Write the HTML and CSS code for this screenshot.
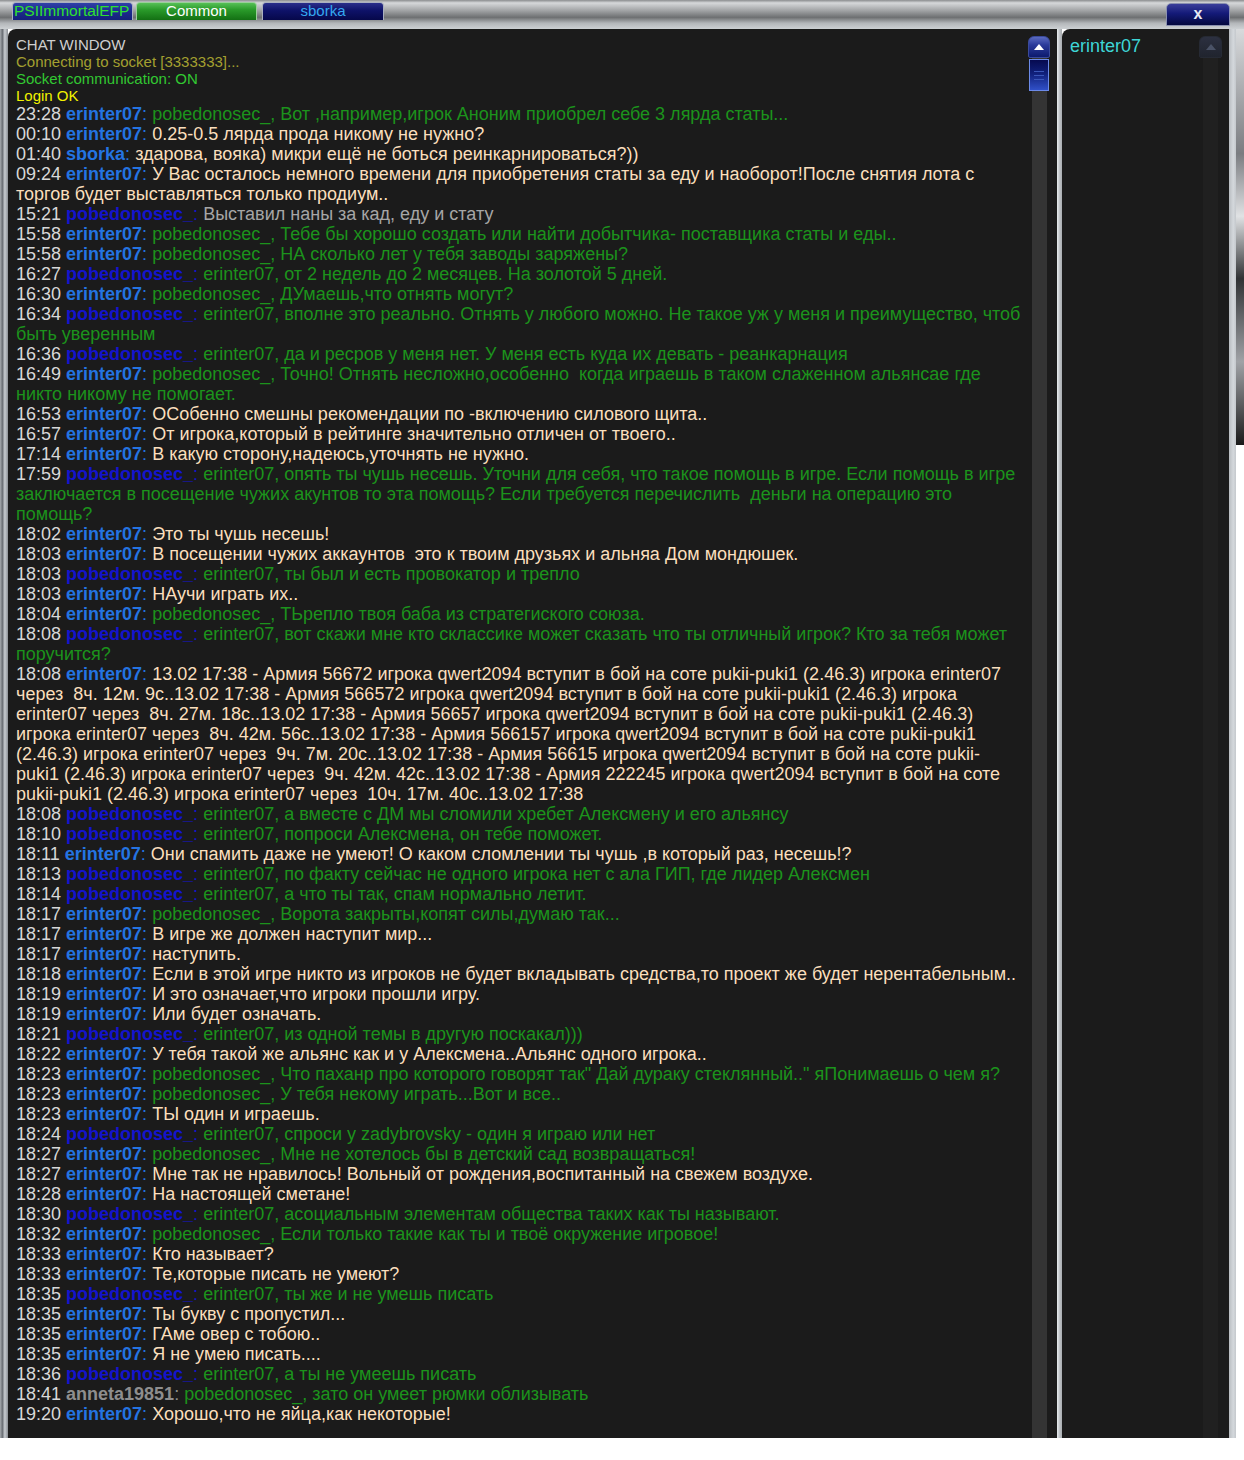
FILE: index.html
```html
<!DOCTYPE html>
<html lang="ru">
<head>
<meta charset="utf-8">
<title>Chat</title>
<link rel="stylesheet" href="styles.css">
</head>
<body>
<div class="window">
  <div class="topbar">
    <div class="tabs">
      <div class="tab tab-psi">PSIImmortalEFP</div>
      <div class="tab tab-common">Common</div>
      <div class="tab tab-sborka">sborka</div>
    </div>
    <div class="close">x</div>
  </div>
  <div class="main">
    <div class="edge-left"></div>
    <div class="chat">
      <div class="log">
        <div class="sys s-title">CHAT WINDOW</div>
        <div class="sys s-conn">Connecting to socket [3333333]...</div>
        <div class="sys s-on">Socket communication: ON</div>
        <div class="sys s-login">Login OK</div>
        <p class="m"><span class="t">23:28</span> <span class="u e"><b>erinter07</b>:</span> <span class="g">pobedonosec_, Вот ,например,игрок Аноним приобрел себе 3 лярда статы...</span></p>
        <p class="m"><span class="t">00:10</span> <span class="u e"><b>erinter07</b>:</span> <span class="pc">0.25-0.5 лярда прода никому не нужно?</span></p>
        <p class="m"><span class="t">01:40</span> <span class="u e"><b>sborka</b>:</span> <span class="pc">здарова, вояка) микри ещё не боться реинкарнироваться?))</span></p>
        <p class="m"><span class="t">09:24</span> <span class="u e"><b>erinter07</b>:</span> <span class="pc">У Вас осталось немного времени для приобретения статы за еду и наоборот!После снятия лота с торгов будет выставляться только продиум..</span></p>
        <p class="m"><span class="t">15:21</span> <span class="u p"><b>pobedonosec_</b>:</span> <span class="s">Выставил наны за кад, еду и стату</span></p>
        <p class="m"><span class="t">15:58</span> <span class="u e"><b>erinter07</b>:</span> <span class="g">pobedonosec_, Тебе бы хорошо создать или найти добытчика- поставщика статы и еды..</span></p>
        <p class="m"><span class="t">15:58</span> <span class="u e"><b>erinter07</b>:</span> <span class="g">pobedonosec_, НА сколько лет у тебя заводы заряжены?</span></p>
        <p class="m"><span class="t">16:27</span> <span class="u p"><b>pobedonosec_</b>:</span> <span class="g">erinter07, от 2 недель до 2 месяцев. На золотой 5 дней.</span></p>
        <p class="m"><span class="t">16:30</span> <span class="u e"><b>erinter07</b>:</span> <span class="g">pobedonosec_, ДУмаешь,что отнять могут?</span></p>
        <p class="m"><span class="t">16:34</span> <span class="u p"><b>pobedonosec_</b>:</span> <span class="g">erinter07, вполне это реально. Отнять у любого можно. Не такое уж у меня и преимущество, чтоб быть уверенным</span></p>
        <p class="m"><span class="t">16:36</span> <span class="u p"><b>pobedonosec_</b>:</span> <span class="g">erinter07, да и ресров у меня нет. У меня есть куда их девать - реанкарнация</span></p>
        <p class="m"><span class="t">16:49</span> <span class="u e"><b>erinter07</b>:</span> <span class="g">pobedonosec_, Точно! Отнять несложно,особенно&nbsp; когда играешь в таком слаженном альянсае где никто никому не помогает.</span></p>
        <p class="m"><span class="t">16:53</span> <span class="u e"><b>erinter07</b>:</span> <span class="pc">ОСобенно смешны рекомендации по -включению силового щита..</span></p>
        <p class="m"><span class="t">16:57</span> <span class="u e"><b>erinter07</b>:</span> <span class="pc">От игрока,который в рейтинге значительно отличен от твоего..</span></p>
        <p class="m"><span class="t">17:14</span> <span class="u e"><b>erinter07</b>:</span> <span class="pc">В какую сторону,надеюсь,уточнять не нужно.</span></p>
        <p class="m"><span class="t">17:59</span> <span class="u p"><b>pobedonosec_</b>:</span> <span class="g">erinter07, опять ты чушь несешь. Уточни для себя, что такое помощь в игре. Если помощь в игре заключается в посещение чужих акунтов то эта помощь? Если требуется перечислить&nbsp; деньги на операцию это помощь?</span></p>
        <p class="m"><span class="t">18:02</span> <span class="u e"><b>erinter07</b>:</span> <span class="pc">Это ты чушь несешь!</span></p>
        <p class="m"><span class="t">18:03</span> <span class="u e"><b>erinter07</b>:</span> <span class="pc">В посещении чужих аккаунтов&nbsp; это к твоим друзьях и альняа Дом мондюшек.</span></p>
        <p class="m"><span class="t">18:03</span> <span class="u p"><b>pobedonosec_</b>:</span> <span class="g">erinter07, ты был и есть провокатор и трепло</span></p>
        <p class="m"><span class="t">18:03</span> <span class="u e"><b>erinter07</b>:</span> <span class="pc">НАучи играть их..</span></p>
        <p class="m"><span class="t">18:04</span> <span class="u e"><b>erinter07</b>:</span> <span class="g">pobedonosec_, ТЬрепло твоя баба из стратегиского союза.</span></p>
        <p class="m"><span class="t">18:08</span> <span class="u p"><b>pobedonosec_</b>:</span> <span class="g">erinter07, вот скажи мне кто склассике может сказать что ты отличный игрок? Кто за тебя может поручится?</span></p>
        <p class="m"><span class="t">18:08</span> <span class="u e"><b>erinter07</b>:</span> <span class="pc">13.02 17:38 - Армия 56672 игрока qwert2094 вступит в бой на соте pukii-puki1 (2.46.3) игрока erinter07 через&nbsp; 8ч. 12м. 9с..13.02 17:38 - Армия 566572 игрока qwert2094 вступит в бой на соте pukii-puki1 (2.46.3) игрока erinter07 через&nbsp; 8ч. 27м. 18с..13.02 17:38 - Армия 56657 игрока qwert2094 вступит в бой на соте pukii-puki1 (2.46.3) игрока erinter07 через&nbsp; 8ч. 42м. 56с..13.02 17:38 - Армия 566157 игрока qwert2094 вступит в бой на соте pukii-puki1 (2.46.3) игрока erinter07 через&nbsp; 9ч. 7м. 20с..13.02 17:38 - Армия 56615 игрока qwert2094 вступит в бой на соте pukii-puki1 (2.46.3) игрока erinter07 через&nbsp; 9ч. 42м. 42с..13.02 17:38 - Армия 222245 игрока qwert2094 вступит в бой на соте pukii-puki1 (2.46.3) игрока erinter07 через&nbsp; 10ч. 17м. 40с..13.02 17:38</span></p>
        <p class="m"><span class="t">18:08</span> <span class="u p"><b>pobedonosec_</b>:</span> <span class="g">erinter07, а вместе с ДМ мы сломили хребет Алексмену и его альянсу</span></p>
        <p class="m"><span class="t">18:10</span> <span class="u p"><b>pobedonosec_</b>:</span> <span class="g">erinter07, попроси Алексмена, он тебе поможет.</span></p>
        <p class="m"><span class="t">18:11</span> <span class="u e"><b>erinter07</b>:</span> <span class="pc">Они спамить даже не умеют! О каком сломлении ты чушь ,в который раз, несешь!?</span></p>
        <p class="m"><span class="t">18:13</span> <span class="u p"><b>pobedonosec_</b>:</span> <span class="g">erinter07, по факту сейчас не одного игрока нет с ала ГИП, где лидер Алексмен</span></p>
        <p class="m"><span class="t">18:14</span> <span class="u p"><b>pobedonosec_</b>:</span> <span class="g">erinter07, а что ты так, спам нормально летит.</span></p>
        <p class="m"><span class="t">18:17</span> <span class="u e"><b>erinter07</b>:</span> <span class="g">pobedonosec_, Ворота закрыты,копят силы,думаю так...</span></p>
        <p class="m"><span class="t">18:17</span> <span class="u e"><b>erinter07</b>:</span> <span class="pc">В игре же должен наступит мир...</span></p>
        <p class="m"><span class="t">18:17</span> <span class="u e"><b>erinter07</b>:</span> <span class="pc">наступить.</span></p>
        <p class="m"><span class="t">18:18</span> <span class="u e"><b>erinter07</b>:</span> <span class="pc">Если в этой игре никто из игроков не будет вкладывать средства,то проект же будет нерентабельным..</span></p>
        <p class="m"><span class="t">18:19</span> <span class="u e"><b>erinter07</b>:</span> <span class="pc">И это означает,что игроки прошли игру.</span></p>
        <p class="m"><span class="t">18:19</span> <span class="u e"><b>erinter07</b>:</span> <span class="pc">Или будет означать.</span></p>
        <p class="m"><span class="t">18:21</span> <span class="u p"><b>pobedonosec_</b>:</span> <span class="g">erinter07, из одной темы в другую поскакал)))</span></p>
        <p class="m"><span class="t">18:22</span> <span class="u e"><b>erinter07</b>:</span> <span class="pc">У тебя такой же альянс как и у Алексмена..Альянс одного игрока..</span></p>
        <p class="m"><span class="t">18:23</span> <span class="u e"><b>erinter07</b>:</span> <span class="g">pobedonosec_, Что паханр про которого говорят так" Дай дураку стеклянный.." яПонимаешь о чем я?</span></p>
        <p class="m"><span class="t">18:23</span> <span class="u e"><b>erinter07</b>:</span> <span class="g">pobedonosec_, У тебя некому играть...Вот и все..</span></p>
        <p class="m"><span class="t">18:23</span> <span class="u e"><b>erinter07</b>:</span> <span class="pc">ТЫ один и играешь.</span></p>
        <p class="m"><span class="t">18:24</span> <span class="u p"><b>pobedonosec_</b>:</span> <span class="g">erinter07, спроси у zadybrovsky - один я играю или нет</span></p>
        <p class="m"><span class="t">18:27</span> <span class="u e"><b>erinter07</b>:</span> <span class="g">pobedonosec_, Мне не хотелось бы в детский сад возвращаться!</span></p>
        <p class="m"><span class="t">18:27</span> <span class="u e"><b>erinter07</b>:</span> <span class="pc">Мне так не нравилось! Вольный от рождения,воспитанный на свежем воздухе.</span></p>
        <p class="m"><span class="t">18:28</span> <span class="u e"><b>erinter07</b>:</span> <span class="pc">На настоящей сметане!</span></p>
        <p class="m"><span class="t">18:30</span> <span class="u p"><b>pobedonosec_</b>:</span> <span class="g">erinter07, асоциальным элементам общества таких как ты называют.</span></p>
        <p class="m"><span class="t">18:32</span> <span class="u e"><b>erinter07</b>:</span> <span class="g">pobedonosec_, Если только такие как ты и твоё окружение игровое!</span></p>
        <p class="m"><span class="t">18:33</span> <span class="u e"><b>erinter07</b>:</span> <span class="pc">Кто называет?</span></p>
        <p class="m"><span class="t">18:33</span> <span class="u e"><b>erinter07</b>:</span> <span class="pc">Те,которые писать не умеют?</span></p>
        <p class="m"><span class="t">18:35</span> <span class="u p"><b>pobedonosec_</b>:</span> <span class="g">erinter07, ты же и не умешь писать</span></p>
        <p class="m"><span class="t">18:35</span> <span class="u e"><b>erinter07</b>:</span> <span class="pc">Ты букву с пропустил...</span></p>
        <p class="m"><span class="t">18:35</span> <span class="u e"><b>erinter07</b>:</span> <span class="pc">ГАме овер с тобою..</span></p>
        <p class="m"><span class="t">18:35</span> <span class="u e"><b>erinter07</b>:</span> <span class="pc">Я не умею писать....</span></p>
        <p class="m"><span class="t">18:36</span> <span class="u p"><b>pobedonosec_</b>:</span> <span class="g">erinter07, а ты не умеешь писать</span></p>
        <p class="m"><span class="t">18:41</span> <span class="u a"><b>anneta19851</b>:</span> <span class="g">pobedonosec_, зато он умеет рюмки облизывать</span></p>
        <p class="m"><span class="t">19:20</span> <span class="u e"><b>erinter07</b>:</span> <span class="pc">Хорошо,что не яйца,как некоторые!</span></p>
      </div>
      <div class="scroll">
        <div class="sb-up"><svg width="10" height="6" viewBox="0 0 10 6"><polygon points="5,0 10,6 0,6" fill="#fff"/></svg></div>
        <div class="sb-track"><div class="sb-thumb"><span></span><span></span><span></span></div></div>
      </div>
    </div>
    <div class="sep"></div>
    <div class="users">
      <div class="user-list"><div class="user">erinter07</div></div>
      <div class="scroll scroll-dim">
        <div class="sb-up sb-up-dim"><svg width="10" height="6" viewBox="0 0 10 6"><polygon points="5,0 10,6 0,6" fill="#4a5266"/></svg></div>
        <div class="sb-track sb-track-dim"></div>
      </div>
    </div>
    <div class="edge-right"></div>
    <div class="edge-far"></div>
  </div>
</div>
</body>
</html>
```

FILE: styles.css
```css
html, body {
  margin: 0;
  padding: 0;
  background: #ffffff;
}
body {
  font-family: "Liberation Sans", Arial, sans-serif;
}
.window {
  width: 1244px;
}
.topbar {
  height: 29px;
  display: flex;
  align-items: flex-start;
  justify-content: space-between;
  background: linear-gradient(to bottom, #8a8c8e 0, #d6d8da 10%, #a4a6a8 35%, #6e7072 60%, #b4b7ba 80%, #cdd1d4 100%);
  padding: 2px 14px 0 12px;
  box-sizing: border-box;
}
.tabs {
  display: flex;
  gap: 3px;
}
.tab {
  width: 121px;
  height: 18px;
  box-sizing: border-box;
  font-size: 15px;
  line-height: 16px;
  text-align: center;
  border: 1px solid #aab0c0;
  border-bottom: none;
  border-radius: 4px 4px 0 0;
  white-space: nowrap;
  overflow: visible;
}
.tab-psi {
  background: linear-gradient(to bottom, #3040a8 0, #1c2a8c 50%, #14207a 100%);
  color: #2ee030;
  font-size: 15.5px;
  text-align: left;
  padding-left: 1px;
}
.tab-common {
  background: linear-gradient(to bottom, #56c056 0, #2a9a2a 40%, #137013 100%);
  color: #ffffff;
  border-color: #9ad09a;
}
.tab-sborka {
  width: 122px;
  margin-left: 2px;
  background: linear-gradient(to bottom, #2a2e8a 0, #0e1268 45%, #06084a 100%);
  color: #34a8f0;
}
.close {
  width: 64px;
  height: 23px;
  margin-top: 1px;
  box-sizing: border-box;
  background: linear-gradient(to bottom, #3a3e9a 0, #141a78 45%, #04083e 100%);
  border: 1px solid #8a90b0;
  border-radius: 5px 5px 0 0;
  color: #e8eaf4;
  font-weight: bold;
  font-size: 16px;
  line-height: 20px;
  text-align: center;
}
.main {
  display: flex;
  height: 1409px;
}
.edge-left {
  width: 8px;
  height: 1421px;
  background: linear-gradient(to right, #a8acb0 0, #6a6e74 30%, #c8ccd0 60%, #8a8e94 100%);
}
.chat {
  width: 1049px;
  background: #1b1b1b;
  border-radius: 8px 0 0 0;
  display: flex;
  box-sizing: border-box;
  padding: 7px 0 0 8px;
}
.log {
  width: 1006px;
  color: #d8d8d8;
}
.sys {
  font-size: 15px;
  line-height: 17px;
}
.s-title { color: #cfcfcf; }
.s-conn { color: #a4a030; }
.s-on { color: #32c832; }
.s-login { color: #f2f200; }
.m {
  margin: 0;
  font-size: 18px;
  line-height: 20px;
}
.t { color: #d8d8d8; }
.u b { font-weight: bold; }
.u.e { color: #2474e2; }
.u.p { color: #1414cc; }
.u.a { color: #8e8e8e; }
.g { color: #1c931c; }
.pc { color: #fadfbd; }
.s { color: #a6a6a6; }
.scroll {
  width: 22px;
  margin-left: 6px;
  display: flex;
  flex-direction: column;
}
.sb-up {
  height: 22px;
  box-sizing: border-box;
  border-radius: 6px 6px 2px 2px;
  background: linear-gradient(to bottom, #5a6ac0 0, #2a3a9a 40%, #0c1a6e 100%);
  border: 1px solid #3a4a9a;
  display: flex;
  align-items: center;
  justify-content: center;
}
.sb-track {
  flex: 1;
  width: 15px;
  margin-left: 4px;
  background: #343434;
  position: relative;
}
.sb-thumb {
  position: absolute;
  left: -3px;
  top: 1px;
  width: 20px;
  height: 32px;
  box-sizing: border-box;
  border: 1px solid #6c8ae8;
  background: linear-gradient(to bottom, #060a50 0, #10207a 45%, #3050c8 100%);
  display: flex;
  flex-direction: column;
  align-items: center;
  justify-content: center;
  gap: 3px;
}
.sb-thumb span {
  display: block;
  width: 10px;
  height: 1px;
  background: #3a56b8;
}
.sep {
  width: 5px;
  background: linear-gradient(to right, #e8ecee 0, #c0c4c8 50%, #a8acb0 100%);
}
.users {
  width: 167px;
  background: #1b1b1b;
  border-radius: 8px 0 0 0;
  display: flex;
  box-sizing: border-box;
  padding: 7px 7px 0 8px;
}
.user-list {
  flex: 1;
}
.user {
  color: #3ed6d6;
  font-size: 18px;
  line-height: 20px;
}
.scroll-dim {
  margin-left: 0;
  width: 23px;
}
.sb-up-dim {
  background: linear-gradient(to bottom, #2c3040 0, #20242e 100%);
  border: 1px solid #262a34;
}
.sb-track-dim {
  background: #202020;
}
.edge-right {
  width: 7px;
  background: linear-gradient(to right, #b8bcc0 0, #d4d8dc 60%, #c4c8cc 100%);
}
.edge-far {
  width: 8px;
  height: 416px;
  background: linear-gradient(to bottom, #d8dadc 0, #7a7c80 30%, #e0e2e4 45%, #303234 60%, #a0a2a6 80%, #1a1a1a 100%);
}
```
